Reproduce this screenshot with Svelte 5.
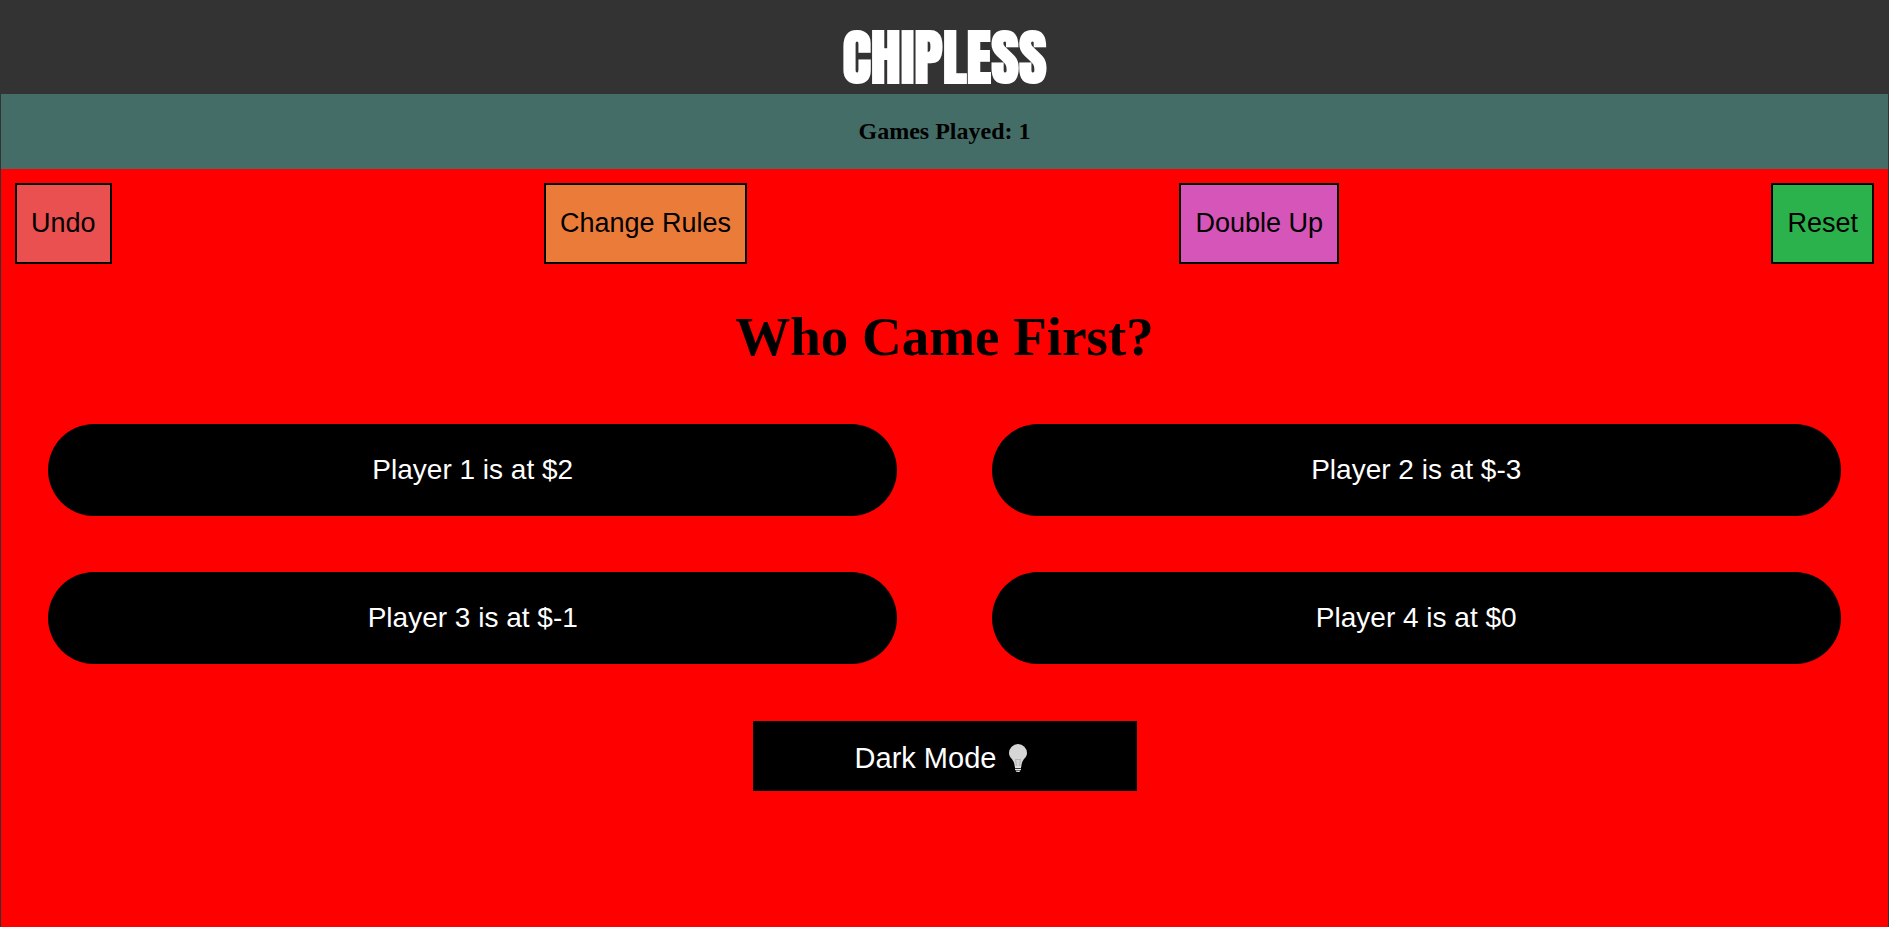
<script>
  let gamesPlayed = $state(1);
  let players = $state([
    { name: 'Player 1', chips: 2 },
    { name: 'Player 2', chips: -3 },
    { name: 'Player 3', chips: -1 },
    { name: 'Player 4', chips: 0 }
  ]);
  const actions = [
    { label: 'Undo', tone: 'undo' },
    { label: 'Change Rules', tone: 'rules' },
    { label: 'Double Up', tone: 'double' },
    { label: 'Reset', tone: 'reset' }
  ];
</script>

<div class="page">
  <header class="banner">
    <h1 class="brand">CHIPLESS</h1>
  </header>
  <main class="game">
    <h2 class="score">Games Played: {gamesPlayed}</h2>
    <div class="actions">
      {#each actions as action}
        <button type="button" class="action {action.tone}">{action.label}</button>
      {/each}
    </div>
    <h2 class="question">Who Came First?</h2>
    <div class="players">
      {#each players as player}
        <button type="button" class="player">{player.name} is at ${player.chips}</button>
      {/each}
    </div>
    <button type="button" class="mode">
      <span>Dark Mode</span>
      <svg class="bulb" viewBox="0 0 36 30" aria-hidden="true">
        <path d="M18 1a9 9 0 0 0-9 9c0 4 3.200 5.500 4.600 8.800.8 1.800 1 3.400 1.200 5.200h6.400c.2-1.800.4-3.400 1.200-5.200C23.800 15.500 27 14 27 10a9 9 0 0 0-9-9Z" fill="#d6d6d6" />
        <path d="M15.500 16.500l1 6.500M20.500 16.500l-1 6.500M15 16.500h6" fill="none" stroke="#b4b4b4" />
        <path d="M15 23.500h6v1.500h-6zM15 25.700h6v1.300h-6zM15.500 27.500h5c-.4 1-1.300 1.500-2.500 1.500s-2.100-.5-2.500-1.500z" fill="#e6e6e6" />
      </svg>
    </button>
  </main>
</div>

<style>
  :global(body) {
    margin: 0;
    background: #333;
  }

  .page {
    display: flex;
    flex-direction: column;
    min-height: 100vh;
    font-family: 'Liberation Serif', 'Times New Roman', serif;
    color: #000;
  }

  h1,
  h2 {
    margin: 0;
  }

  button {
    margin: 0;
    border: 0;
    font-family: 'Liberation Sans', Arial, sans-serif;
    line-height: 32px;
    cursor: pointer;
  }

  .banner {
    padding: 23px 16px 1px;
    background: #333;
    text-align: center;
  }

  .brand {
    font-family: Impact, Anton, Roboto, sans-serif;
    font-size: 60px;
    line-height: 70px;
    font-weight: 900;
    color: #fff;
  }

  .game {
    flex: 1;
    display: flex;
    flex-direction: column;
    border: solid #333;
    border-width: 0 1px;
    background: #f00;
  }

  .score {
    padding: 23px 14px 24px;
    background: #446d67;
    font-size: 24px;
    line-height: 28px;
    text-align: center;
  }

  .actions {
    display: flex;
    flex-wrap: wrap;
    justify-content: space-between;
    gap: 14px;
    padding: 14px;
  }

  .action {
    padding: 22px 14px 23px;
    border: 2px solid #000;
    color: #000;
    font-size: 27px;
  }

  .undo {
    background: #eb5050;
  }

  .rules {
    background: #eb7b39;
  }

  .double {
    background: #d655b8;
  }

  .reset {
    background: #2cb24c;
  }

  .question {
    margin: 28px 14px;
    font-size: 55px;
    line-height: 62px;
    text-align: center;
  }

  .players {
    display: grid;
    grid-template-columns: 45% 45%;
    justify-content: space-around;
    row-gap: 56px;
    padding: 28px 0;
  }

  .player {
    padding: 30px 16px;
    border-radius: 46px;
    background: #000;
    color: #fff;
    font-size: 28px;
  }

  .mode {
    align-self: center;
    display: flex;
    align-items: center;
    justify-content: center;
    gap: 4px;
    min-width: 384px;
    margin: 29px 14px;
    padding: 21px 14px 17px 16px;
    background: #000;
    color: #fff;
    font-size: 29px;
  }

  .bulb {
    width: 36px;
    height: 30px;
  }
</style>
